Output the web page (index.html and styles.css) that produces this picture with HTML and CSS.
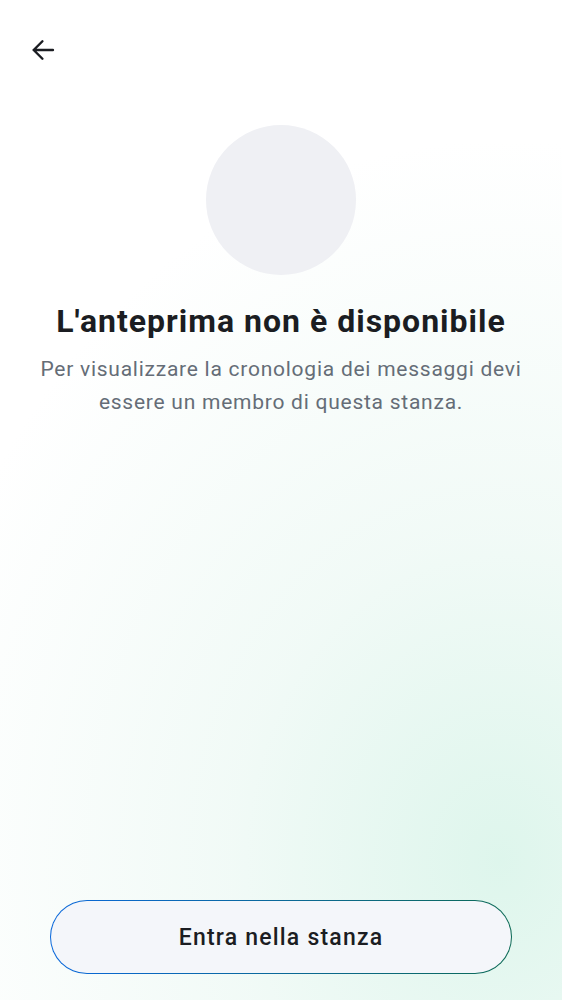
FILE: index.html
```html
<!DOCTYPE html>
<html lang="it">
<head>
<meta charset="utf-8">
<link rel="stylesheet" href="styles.css">
</head>
<body>
<div class="screen">
  <header class="topbar">
    <button class="back" aria-label="Indietro">
      <svg width="28" height="28" viewBox="0 0 24 24"><path d="M20.5 12H4M11.5 4.5L4 12l7.5 7.5" fill="none" stroke="#1b1d22" stroke-width="2.1" stroke-linecap="round" stroke-linejoin="round"/></svg>
    </button>
  </header>
  <main class="content">
    <div class="avatar"></div>
    <h1 class="title">L'anteprima non è disponibile</h1>
    <p class="subtitle">Per visualizzare la cronologia dei messaggi devi essere un membro di questa stanza.</p>
  </main>
  <footer class="actions">
    <button class="join">Entra nella stanza</button>
  </footer>
</div>
</body>
</html>
```
FILE: styles.css
```css
html, body {
  margin: 0;
  padding: 0;
}
body {
  font-family: Roboto, "Noto Sans", sans-serif;
  background: #ffffff;
}
.screen {
  width: 562px;
  height: 1000px;
  display: flex;
  flex-direction: column;
  background:
    radial-gradient(ellipse 600px 720px at 500px 860px, rgba(220, 245, 235, 0.95), rgba(232, 247, 241, 0.6) 45%, rgba(255, 255, 255, 0) 100%),
    #ffffff;
}
.topbar {
  height: 100px;
  padding: 36px 0 0 29px;
  box-sizing: border-box;
}
.back {
  width: 28px;
  height: 28px;
  padding: 0;
  border: 0;
  background: none;
  display: block;
}
.content {
  display: flex;
  flex-direction: column;
  align-items: center;
  padding: 25px 16px 0;
}
.avatar {
  width: 150px;
  height: 150px;
  border-radius: 50%;
  background: #eff0f4;
}
.title {
  margin: 24px 0 0;
  font-size: 32px;
  font-weight: 700;
  letter-spacing: 1px;
  color: #1b1d22;
  line-height: 44px;
  white-space: nowrap;
}
.subtitle {
  margin: 10px 0 0;
  font-size: 21px;
  letter-spacing: 0.75px;
  line-height: 33px;
  color: #656d77;
  text-align: center;
  max-width: 520px;
}
.actions {
  margin-top: auto;
  padding: 0 50px 26px;
}
.join {
  width: 100%;
  height: 74px;
  border-radius: 37px;
  border: 1.5px solid transparent;
  background:
    linear-gradient(#f4f6fa, #f4f6fa) padding-box,
    linear-gradient(90deg, #0a68dc, #0c6a55) border-box;
  font-family: Roboto, "Noto Sans", sans-serif;
  font-size: 23px;
  font-weight: 500;
  letter-spacing: 1.2px;
  color: #1b1d22;
  display: block;
}
```
